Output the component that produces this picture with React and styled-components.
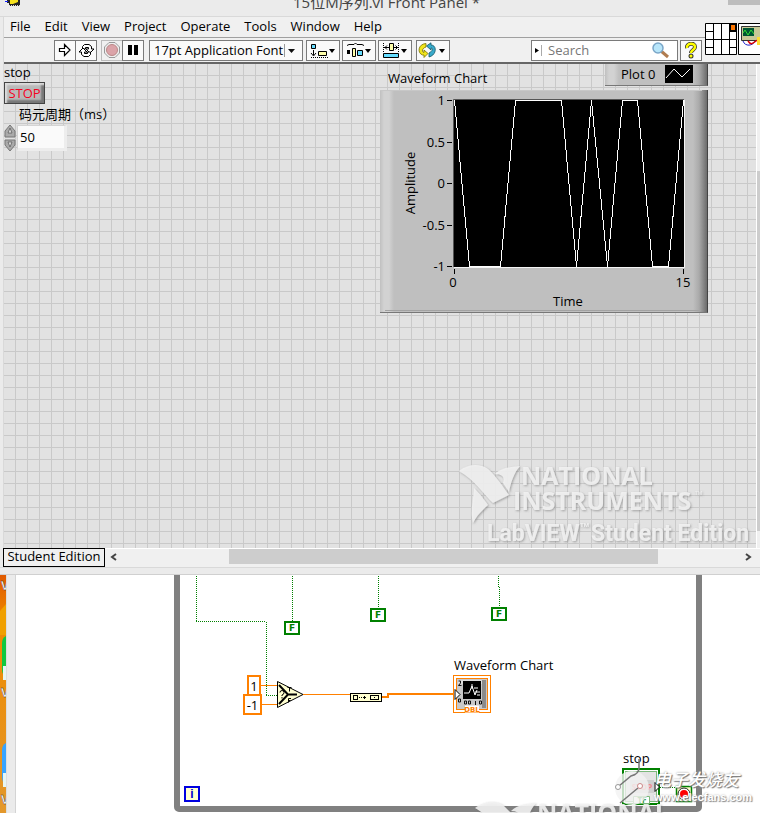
import React from "react";
import styled, { createGlobalStyle, css } from "styled-components";

const Global = createGlobalStyle`
  * { box-sizing: border-box; }
  body { margin: 0; background: #ebebeb; overflow: hidden; }
  button, input, select { font: inherit; color: inherit; margin: 0; }
`;

const Page = styled.div`
  height: 100vh;
  display: flex;
  flex-direction: column;
  overflow: hidden;
  font-family: "Open Sans", "Noto Sans CJK SC", sans-serif;
  font-size: 13px;
  line-height: 18px;
  color: #000;
`;

/* ---------- Front panel window ---------- */
const Window = styled.section`
  flex: none;
  background: #ebebeb;
  border-bottom: 1px solid #d0d0d0;
`;
const TitleBar = styled.header`
  height: 17px;
  display: flex;
  justify-content: space-between;
  align-items: flex-end;
  border-bottom: 1px solid #d9d9d9;
  overflow: hidden;
`;
const TitleIcon = styled.svg`
  width: 20px;
  height: 7px;
  margin: 0 0 0 5px;
  align-self: flex-start;
`;
const Title = styled.h1`
  margin: 0 0 2px 20px;
  font-size: 15px;
  line-height: 24px;
  font-weight: 400;
  color: #444;
  white-space: nowrap;
`;
const CloseStub = styled.span`
  width: 32px;
  height: 5px;
  background: #bdbdbd;
  align-self: flex-start;
`;
const Frame = styled.div`
  margin-left: 3px;
  border-left: 1px solid #d9d9d9;
`;
const Head = styled.div`
  display: flex;
  background: #f0f0f0;
  border-bottom: 2px solid #666;
`;
const HeadBars = styled.div`
  flex: 1;
  min-width: 0;
`;
const MenuBar = styled.nav`
  height: 21px;
  display: flex;
  align-items: center;
  gap: 14px;
  padding: 0 0 3px 6px;
  border-bottom: 1px solid #a0a0a0;
`;
const MenuItem = styled.button`
  padding: 0;
  border: 0;
  background: none;
`;
const Toolbar = styled.div`
  height: 24px;
  display: flex;
  align-items: center;
  padding: 0 3px 0 50px;
`;
const ToolButton = styled.button`
  width: ${(p) => p.$w || 22}px;
  height: 21px;
  padding: 0;
  display: flex;
  align-items: center;
  justify-content: center;
  border: 1px solid ${(p) => (p.$dim ? "#bbb" : "#7a7a7a")};
  background: ${(p) => (p.$dim ? "#f0f0f0" : "#fafafa")};
  margin-left: ${(p) => p.$gap || 0}px;
  flex: none;
  svg { display: block; }
`;
const FontPicker = styled.label`
  position: relative;
  display: flex;
  align-items: center;
  width: 154px;
  height: 21px;
  margin-left: 5px;
  border: 1px solid #7a7a7a;
  background: #fafafa;
  svg { position: absolute; right: 0; pointer-events: none; }
`;
const FontSelect = styled.select`
  appearance: none;
  width: 100%;
  height: 19px;
  padding: 0 0 0 4px;
  border: 0;
  background: none;
`;
const SearchBox = styled.label`
  display: flex;
  align-items: center;
  width: 147px;
  height: 21px;
  margin-left: auto;
  border: 1px solid #7a7a7a;
  background: #fff;
`;
const SearchInput = styled.input`
  flex: 1;
  min-width: 0;
  height: 19px;
  padding: 0 3px;
  border: 0;
  outline: 0;
  background: none;
  &::placeholder { color: #777; opacity: 1; }
`;
const PaneIcons = styled.div`
  display: flex;
  gap: 1px;
  align-items: flex-end;
  width: 55px;
  overflow: hidden;
  svg { flex: none; }
`;
const PanelRow = styled.div`
  display: flex;
`;
const Panel = styled.main`
  position: relative;
  flex: 1;
  height: 484px;
  overflow: hidden;
  background-color: #e2e2e2;
  background-image:
    linear-gradient(#c9c9c9 1px, transparent 1px),
    linear-gradient(90deg, #c9c9c9 1px, transparent 1px);
  background-size: 12px 12px;
  background-position: 0 11px, 11px 0;
`;
const VScroll = styled.div`
  width: 4px;
  border-left: 1px solid #fff;
  background: linear-gradient(#f0f0f0 107px, #cdcdcd 107px 467px, #f0f0f0 467px);
`;
const Placed = styled.div`
  position: absolute;
  left: ${(p) => p.$x}px;
  top: ${(p) => p.$y}px;
  white-space: nowrap;
`;
const StopButton = styled.button`
  display: block;
  width: 41px;
  height: 22px;
  margin-top: 1px;
  padding: 0;
  border: 1px solid #444;
  background: #b9b9b9;
  color: #f5001d;
  box-shadow: inset 2px 2px 2px #ddd, inset -3px -3px 2px #777;
`;
const NumericField = styled.div`
  display: flex;
  align-items: center;
  gap: 1px;
  input {
    width: 50px;
    height: 26px;
    padding: 0 0 0 2px;
    border: 1px solid #d4d4d4;
    border-right: 3px solid #ededed;
    border-bottom: 3px solid #ededed;
    outline: 0;
    background: #fafafa;
  }
`;
const Bevel = css`
  background: linear-gradient(90deg, #c0c0c0, #d2d2d2 4px 9px, #bfbfbf 14px calc(100% - 14px), #aaa calc(100% - 8px), #6c6c6c);
  border-bottom: 1px solid #777;
  border-right: 1px solid #444;
`;
const Legend = styled.div`
  ${Bevel}
  display: flex;
  align-items: center;
  justify-content: space-between;
  width: 103px;
  height: 22px;
  padding: 0 14px 2px 16px;
`;
const Chart = styled.div`
  ${Bevel}
  width: 328px;
  height: 223px;
`;
const Brand = styled.div`
  position: absolute;
  right: ${(p) => p.$right}px;
  top: ${(p) => p.$top}px;
  width: 294px;
  height: 86px;
`;

/* ---------- Status row ---------- */
const StatusRow = styled.div`
  display: flex;
  align-items: stretch;
  height: 19px;
  margin-left: -1px;
  border-top: 1px solid #fff;
`;
const Edition = styled.span`
  width: 102px;
  margin-top: -1px;
  border: 1px solid #000;
  background: #f0f0f0;
  text-align: center;
  line-height: 15px;
`;
const ScrollButton = styled.button`
  width: ${(p) => p.$w}px;
  padding: 0 0 2px;
  border: 0;
  background: #f0f0f0;
  display: flex;
  align-items: center;
  justify-content: center;
`;
const ScrollTrack = styled.div`
  flex: 1;
  background: #f0f0f0;
  padding: 0 78px 3px 107px;
`;
const ScrollThumb = styled.div`
  height: 15px;
  background: #cdcdcd;
`;
const FrameFoot = styled.div`
  height: 7px;
  border-top: 1px solid #d9d9d9;
`;

/* ---------- Block diagram window ---------- */
const Lower = styled.section`
  flex: 1;
  display: flex;
  min-height: 238px;
`;
const Desktop = styled.svg`
  width: 6px;
  height: 238px;
  flex: none;
`;
const Edge = styled.div`
  width: 10px;
  flex: none;
  background: #ebebeb;
  border-right: 1px solid #d4d4d4;
  border-left: 1px solid #ddd;
`;
const Diagram = styled.div`
  position: relative;
  flex: 1;
  background: #fff;
  overflow: hidden;
`;
const Loop = styled.div`
  position: absolute;
  left: 158px;
  top: -10px;
  width: 528px;
  height: 247px;
  border: 6px solid #808080;
  border-radius: 0 0 5px 5px;
`;
const Layer = styled.svg`
  position: absolute;
  left: 0;
  top: 0;
`;
const Const = styled.div`
  display: flex;
  align-items: center;
  justify-content: center;
  width: ${(p) => p.$w}px;
  height: ${(p) => p.$h}px;
  border: 2px solid ${(p) => p.$c};
  background: #fff;
`;
const LogicConst = styled(Const)`
  color: #008000;
  font: 700 9px "DejaVu Sans", sans-serif;
`;
const IndexTerminal = styled(Const)`
  background: #ffffd0;
  color: #00c;
  font: 700 12px "Liberation Sans", sans-serif;
`;
const SiteName = styled.div`
  color: #fff;
  font: italic 500 17px/20px "Noto Sans CJK SC", sans-serif;
  text-shadow: 1px 1px 1px #777, 0 0 2px #999;
`;
const SiteUrl = styled.div`
  color: #fff;
  font: 700 11px/16px "Liberation Sans", sans-serif;
  text-shadow: 1px 1px 1px #888, 0 0 2px #aaa;
`;

const Caret = () => (
  <svg width="19" height="19" viewBox="0 0 19 19">
    <path d="M1.500 3v13" stroke="#999" />
    <path d="M5 8h7l-3.500 4z" fill="#111" />
  </svg>
);

const STEPS = [1, -1, -1, -1, 1, 1, 1, 1, -1, 1, -1, 1, 1, -1, -1, 1];

function WaveChart() {
  const pts = STEPS.map((v, i) => `${Math.round(74 + (i * 229) / 15) + 0.5},${v > 0 ? 10.5 : 176.5}`).join(" ");
  return (
    <Chart>
      <svg width="327" height="222" viewBox="0 0 327 222" fontSize="13" role="img" aria-label="Waveform Chart">
        <path d="M0 .5h322" stroke="#c7c7c7" />
        <path d="M5 220.500h316" stroke="#a2a2a2" />
        <rect x="74" y="10" width="230" height="167" fill="#000" />
        <path d="M73.500 177V9.500H304" stroke="#555" fill="none" />
        <path d="M304.500 10V177.500H74" stroke="#f4f4f4" fill="none" />
        <polyline points={pts} fill="none" stroke="#fff" strokeWidth="1" shapeRendering="crispEdges" />
        {["1", "0.5", "0", "-0.5", "-1"].map((t, i) => (
          <g key={t}>
            <text x="65" y={15 + Math.round(i * 41.5)} textAnchor="end">{t}</text>
            <path d={`M67 ${10.5 + Math.round(i * 41.5)}h5`} stroke="#000" />
          </g>
        ))}
        <path d="M74.500 179v5M303.500 179v5" stroke="#000" />
        <text x="73" y="197" textAnchor="middle">0</text>
        <text x="303" y="197" textAnchor="middle">15</text>
        <text x="188" y="216" textAnchor="middle">Time</text>
        <text transform="translate(35 93) rotate(-90)" textAnchor="middle">Amplitude</text>
      </svg>
    </Chart>
  );
}

function NiBrand({ right, top, id }) {
  return (
    <Brand $right={right} $top={top}>
      <svg width="294" height="86" viewBox="0 0 294 86" fontFamily='"Open Sans", sans-serif' fontWeight="700" fill="#f2f2f2" fillOpacity=".88" filter={`url(#${id})`}>
        <defs>
          <filter id={id} x="-5%" y="-5%" width="110%" height="115%">
            <feDropShadow dx="1" dy="1" stdDeviation=".8" floodColor="#666" floodOpacity=".6" />
          </filter>
        </defs>
        <path d="M0 6C10 -2 22 -1 29 4C38 12 44 22 50 30L34 38C26 31 16 15 0 6Z" />
        <path d="M36 9C43 2 52 2 61 1C55 8 52 17 50 27L44 18Q47 9 36 9Z" />
        <path d="M15 23C22 30 24 33 29 40C23 46 18 50 14 58C11 47 14 38 15 23Z" />
        <text x="62" y="20" fontSize="25">NATIONAL</text>
        <text x="54" y="45" fontSize="25">INSTRUMENTS</text>
        <text x="236" y="30" fontSize="5" fontWeight="400">TM</text>
        <g fontFamily="Roboto, sans-serif">
          <text x="28" y="76" fontSize="23">LabVIEW</text>
          <text x="121" y="62" fontSize="6">TM</text>
          <text x="132" y="76" fontSize="23">Student Edition</text>
        </g>
      </svg>
    </Brand>
  );
}

function DesktopStrip() {
  return (
    <Desktop viewBox="0 0 6 238" aria-label="Desktop">
      <defs>
        <linearGradient id="desk" x1="0" y1="0" x2="0" y2="1">
          <stop offset="0" stopColor="#e05a00" />
          <stop offset=".2" stopColor="#ef8a00" />
          <stop offset="1" stopColor="#e3982c" />
        </linearGradient>
      </defs>
      <path d="M0 0h6v238H0z" fill="url(#desk)" />
      <path d="M0 36L6 29V60H0z" fill="#f0a000" />
      <path d="M6 61Q2 63 2 68V94Q2 100 6 102z" fill="#10c840" />
      <path d="M6 168Q2 170 2 175V201Q2 208 6 210z" fill="#38a4ff" />
      <path d="M3 91h3v14H3zM3 198h3v14H3z" fill="#e6f6f4" />
      <g fill="#fff" stroke="#333" strokeWidth=".4" fontSize="12" fontWeight="700">
        <text x="1" y="15">V</text>
        <text x="1" y="122">V</text>
        <text x="1" y="229">V</text>
      </g>
    </Desktop>
  );
}

function Wiring() {
  return (
    <Layer width="744" height="238" viewBox="0 0 744 238" fill="none">
      <g stroke="#008000" strokeDasharray="1 1" shapeRendering="crispEdges">
        <path d="M180.500 1V46.500M180 46.500H250M250.500 47V120.500M250 120.500H261" />
        <path d="M276.500 1V46M362.500 1V33M482.500 1V12M483.500 12V32" />
        <path d="M644 212.500H660" />
      </g>
      <g stroke="#ff8000" shapeRendering="crispEdges">
        <path d="M245 110.500H261M246 129.500H261M287 119.500H334" />
        <path d="M366 122H372V119H437" strokeWidth="2" />
      </g>
      {/* select */}
      <path d="M261.500 106.500L287 119.500L261.500 132.500Z" fill="#ffffd0" stroke="#000" />
      <path d="M263 110L272 119.500L263 129M272 119.500H281" stroke="#000" strokeWidth="2" />
      <path d="M264 117.500q0-2 2-2t2 2-2 2.500v1M266 122v1.500M271.500 112.500h4M273.500 112.500v4M275 123.500h-2.500v4M272.500 125.500h2" stroke="#000" />
      {/* array node */}
      <g shapeRendering="crispEdges">
        <path d="M334.500 118.500h31v8h-31z" fill="#ffffd0" stroke="#000" />
        <path d="M337.500 120.500h4v4h-4zM354.500 120.500h8v4h-8z" stroke="#000" />
        <path d="M343 122.500h5" stroke="#000" strokeDasharray="1 1" />
        <path d="M347 122.500h3M348.500 121v3M358 122.500h1" stroke="#000" />
      </g>
      {/* chart terminal */}
      <g shapeRendering="crispEdges">
        <path d="M437.500 100.500h37v37h-37z" fill="#fff" stroke="#ff8000" />
        <path d="M440.500 103.500h31v31h-31z" fill="#c8c8c8" stroke="#ff8000" />
        <path d="M442 105h28v4h-28z" fill="#ddd" />
        <path d="M466 105h4v28h-4z" fill="#8a8a8a" />
        <path d="M447 106h18v18h-18z" fill="#000" />
      </g>
      <path d="M448 118h5l3-7 3 9 2-5M456 109v5M458 113h4M459 117h5M461 120h3" stroke="#fff" />
      <path d="M442.500 106h2v2l-2 2.500h3M442.500 124h2v3h-2zM448.500 126h2v3h-2zM452.500 126h2v3h-2zM459.500 126v4M463.500 126h2v3h-2z" stroke="#111" />
      <path d="M439 114.500v10l5-5z" fill="#fff" stroke="#000" />
      <path d="M449 130.500h14v7h-14z" fill="#fff" />
      <text x="456" y="137" textAnchor="middle" fill="#ff8000" fontSize="7" fontWeight="700" fontFamily='"DejaVu Sans", sans-serif'>DBL</text>
      {/* stop terminal */}
      <g shapeRendering="crispEdges">
        <path d="M607 194h36v35h-36z" fill="#fff" stroke="#008000" strokeWidth="2" />
        <path d="M609.500 196.500h31v30h-31z" fill="#e4e4e4" stroke="#7bb87b" />
        <path d="M614 205h24v13h-24z" fill="#cfcfcf" />
      </g>
      <text x="626" y="215" textAnchor="middle" fill="#e88" fontSize="8" fontWeight="700">STOP</text>
      <path d="M617.500 221.500h16v7h-16z" fill="#fff" stroke="#7bb87b" />
      <text x="626" y="228" textAnchor="middle" fill="#3a9a3a" fontSize="8" fontWeight="700">TF</text>
      <path d="M639 207.500v9l4.500-4.500z" fill="#fff" stroke="#000" />
      {/* loop condition */}
      <path d="M660.500 211.500h15v15h-15z" fill="#ffffc8" stroke="#008000" strokeWidth="1.500" />
      <circle cx="668" cy="219" r="6" fill="#fff" stroke="#222" />
      <circle cx="668" cy="219" r="4" fill="#f00" />
    </Layer>
  );
}

function SiteMark() {
  return (
    <>
      <Placed $x={595} $y={184}>
        <svg width="48" height="54" viewBox="0 0 48 54" fill="none">
          <circle cx="21" cy="29" r="17" fill="#f3f3f3" fillOpacity=".8" />
          <path d="M8 27L20 17Q28 15 28 9V0M9 44L27 29" stroke="#777" strokeWidth="1.500" />
          <circle cx="7" cy="28" r="2.500" fill="#fff" stroke="#999" />
          <circle cx="29" cy="27" r="2.500" fill="#fff" stroke="#c88" />
        </svg>
      </Placed>
      <Placed $x={638} $y={194}>
        <SiteName>电子发烧友</SiteName>
        <SiteUrl>www.elecfans.com</SiteUrl>
      </Placed>
    </>
  );
}

const MENUS = ["File", "Edit", "View", "Project", "Operate", "Tools", "Window", "Help"];

export default function App() {
  return (
    <Page>
      <Global />
      <Window>
        <TitleBar>
          <TitleIcon viewBox="0 0 20 7">
            <path d="M2 0h13v6H4V3H2z" fill="#222" />
            <path d="M5 0h8v2l-5 2H5z" fill="#f5e11d" />
            <path d="M0 1.500h3" stroke="#12f" />
            <path d="M4 5.500h11" stroke="#ddd" strokeDasharray="1 1" />
          </TitleIcon>
          <Title>15位M序列.vi Front Panel *</Title>
          <CloseStub />
        </TitleBar>
        <Frame>
          <Head>
            <HeadBars>
              <MenuBar>{MENUS.map((m) => <MenuItem key={m}>{m}</MenuItem>)}</MenuBar>
              <Toolbar>
                <ToolButton aria-label="Run">
                  <svg width="14" height="14" viewBox="0 0 14 14"><path d="M1.500 5.500h5v-4l5.500 5.500-5.500 5.500v-4h-5z" fill="#fff" stroke="#000" strokeWidth="1.200" /></svg>
                </ToolButton>
                <ToolButton aria-label="Run continuously" $gap={-1}>
                  <svg width="17" height="15" viewBox="0 0 17 15" fill="#fff" stroke="#000">
                    <path d="M4.500 6V3.500L6.500 1.500H11l2.500 2V6h2.500L12 10 8 6h2.500V4.500H7.500V6z" />
                    <path d="M12.500 9v2.500l-2 2H6l-2.500-2V9H1L5 5l4 4H6.500v1.500h3V9z" />
                  </svg>
                </ToolButton>
                <ToolButton aria-label="Abort" $gap={4} $dim>
                  <svg width="16" height="16" viewBox="0 0 16 16"><path d="M5 .5h6L15.500 5v6L11 15.500H5L.5 11V5z" fill="#eee" stroke="#999" /><circle cx="8" cy="8" r="5.500" fill="#dba3a8" stroke="#b88" /></svg>
                </ToolButton>
                <ToolButton aria-label="Pause" $gap={-1}>
                  <svg width="10" height="10" viewBox="0 0 10 10"><path d="M0 0h4v10H0zM6 0h4v10H6z" /></svg>
                </ToolButton>
                <FontPicker>
                  <FontSelect aria-label="Font"><option>17pt Application Font</option></FontSelect>
                  <Caret />
                </FontPicker>
                <ToolButton aria-label="Align" $w={34} $gap={3}>
                  <svg width="30" height="17" viewBox="0 0 30 17"><path d="M3.500 2.500h4v4h-4z" fill="#6df" stroke="#000" /><path d="M10.500 9.500h8v4h-8z" fill="#ffa" stroke="#000" /><path d="M5.500 8v5M3 11l2.500 3L8 11" stroke="#000" fill="none" /><path d="M3 15.500h17" stroke="#000" strokeDasharray="1 1" /><path d="M21 7h6l-3 4z" /></svg>
                </ToolButton>
                <ToolButton aria-label="Distribute" $w={34} $gap={2}>
                  <svg width="30" height="17" viewBox="0 0 30 17"><path d="M3 3.500L5 2.500h5l1.500-1.500L13 2.500h5l2 1" stroke="#000" fill="none" /><path d="M3 8h3v4H3z" /><path d="M8.500 6.500h3v8h-3z" fill="#ffa" stroke="#000" /><path d="M13.500 8.500h5v5h-5z" fill="#6df" stroke="#000" /><path d="M21 7h6l-3 4z" /></svg>
                </ToolButton>
                <ToolButton aria-label="Resize" $w={34} $gap={2}>
                  <svg width="30" height="17" viewBox="0 0 30 17"><path d="M3.500 1v10M18.500 1v10" stroke="#000" strokeDasharray="1 1" /><path d="M9.500 1.500h4v7h-4z" fill="#ffa" stroke="#000" /><path d="M3.500 11.500h15v4h-15z" fill="#6df" stroke="#000" /><path d="M4 5.500h5M14 5.500h4M7 3.500L5 5.500l2 2M15.500 3.500l2 2-2 2" stroke="#000" fill="none" /><path d="M21 7h6l-3 4z" /></svg>
                </ToolButton>
                <ToolButton aria-label="Reorder" $w={34} $gap={4}>
                  <svg width="30" height="17" viewBox="0 0 30 17"><path d="M8 1.500C0 2 -1 11 4.500 13H6v2.500l4-4-4-3.500v2.500C3 9.500 4.500 6 8 5z" fill="#f1e51b" stroke="#776f00" strokeWidth=".8" /><path d="M8.500 4L13 .8V3c6 0 6 10-2 12v-4c4-2 4-5 2-5v2z" fill="#38aacb" stroke="#156" strokeWidth=".8" /><path d="M21 7h6l-3 4z" /></svg>
                </ToolButton>
                <SearchBox>
                  <svg width="13" height="17" viewBox="0 0 13 17"><path d="M3 6l4 2.500L3 11z" /><path d="M9.500 3v11" stroke="#aaa" /></svg>
                  <SearchInput placeholder="Search" aria-label="Search" />
                  <svg width="26" height="19" viewBox="0 0 26 19"><path d="M10 10l7 6" stroke="#b07c50" strokeWidth="3" /><circle cx="7" cy="7" r="5" fill="#b8e6fa" stroke="#7aa6c8" strokeWidth="1.500" /></svg>
                </SearchBox>
                <ToolButton aria-label="Help" $gap={2}>
                  <svg width="12" height="17" viewBox="0 0 12 17"><path d="M2 6C1 1 10 0 10 5c0 3-4 3-4 6" fill="none" stroke="#333" strokeWidth="4" /><circle cx="6" cy="14" r="2.500" fill="#333" /><path d="M2 6C1 1 10 0 10 5c0 3-4 3-4 6" fill="none" stroke="#ff0" strokeWidth="2.500" /><circle cx="6" cy="14" r="1.500" fill="#ff0" /></svg>
                </ToolButton>
              </Toolbar>
            </HeadBars>
            <PaneIcons>
              <svg width="32" height="39" viewBox="0 0 32 39"><path d="M.5 .5h31v31H.5zM8.500 .5v31M16.500 .5v31M24.500 .5v31M.5 8.500h8M.5 16.500h31M.5 24.500h8M24.500 8.500h7M24.500 24.500h7" fill="#fff" stroke="#000" /><path d="M24 0h8v9h-8z" /><path d="M26 2h4v5h-4z" fill="#f70" /></svg>
              <svg width="32" height="39" viewBox="0 0 32 39"><path d="M.5 .5h31v31H.5z" fill="#fff" stroke="#000" /><path d="M3.500 3.500h20v14h-20z" fill="#c8c896" stroke="#333" /><path d="M5 5h11v8H5z" fill="#053" /><path d="M5 10l2-3 3 5 3-5 3 4" fill="none" stroke="#3d3" /><path d="M5 18c2 6 10 5 12 0" fill="none" stroke="#22c" /><path d="M10 18c4 6 6 0 10-1" fill="none" stroke="#d00" strokeWidth="1.500" /><path d="M19 14h12v8H19z" fill="#fd3" /></svg>
            </PaneIcons>
          </Head>
          <PanelRow>
            <Panel>
              <Placed $x={0} $y={-1}>stop<StopButton>STOP</StopButton></Placed>
              <Placed $x={15} $y={41}><label htmlFor="period">码元周期（ms）</label></Placed>
              <Placed $x={0} $y={60}>
                <NumericField>
                  <svg width="12" height="28" viewBox="0 0 12 28"><path d="M6 1l5 6v6H1V7zM1 16h10v5l-5 6-5-6z" fill="#aaa" stroke="#777" /><path d="M6 4l2 5H4zM4 18h4l-2 5z" fill="#ddd" stroke="#555" strokeWidth=".7" /></svg>
                  <input id="period" defaultValue="50" />
                </NumericField>
              </Placed>
              <Placed $x={384} $y={5}>Waveform Chart</Placed>
              <Placed $x={601} $y={0}>
                <Legend>Plot 0
                  <svg width="28" height="18" viewBox="0 0 28 18"><path d="M0 0h28v18H0z" fill="#000" /><path d="M1 13l8-9 8 8 8-8" stroke="#fff" fill="none" /></svg>
                </Legend>
              </Placed>
              <Placed $x={376} $y={26}><WaveChart /></Placed>
              <NiBrand right={3} top={401} id="panelMark" />
            </Panel>
            <VScroll />
          </PanelRow>
          <StatusRow>
            <Edition>Student Edition</Edition>
            <ScrollButton $w={17} aria-label="Scroll left"><svg width="7" height="8" viewBox="0 0 7 8"><path d="M6 1L2 4l4 3" fill="none" stroke="#444" strokeWidth="2" /></svg></ScrollButton>
            <ScrollTrack><ScrollThumb /></ScrollTrack>
            <ScrollButton $w={24} aria-label="Scroll right"><svg width="7" height="8" viewBox="0 0 7 8"><path d="M1 1l4 3-4 3" fill="none" stroke="#444" strokeWidth="2" /></svg></ScrollButton>
          </StatusRow>
        </Frame>
        <FrameFoot />
      </Window>
      <Lower>
        <DesktopStrip />
        <Edge />
        <Diagram>
          <Loop />
          <Wiring />
          <Placed $x={268} $y={46}><LogicConst $w={16} $h={14} $c="#008000">F</LogicConst></Placed>
          <Placed $x={354} $y={33}><LogicConst $w={16} $h={14} $c="#008000">F</LogicConst></Placed>
          <Placed $x={475} $y={32}><LogicConst $w={16} $h={14} $c="#008000">F</LogicConst></Placed>
          <Placed $x={231} $y={100}><Const $w={14} $h={21} $c="#ff8000">1</Const></Placed>
          <Placed $x={227} $y={119}><Const $w={19} $h={21} $c="#ff8000">-1</Const></Placed>
          <Placed $x={438} $y={81}>Waveform Chart</Placed>
          <Placed $x={607} $y={174}>stop</Placed>
          <Placed $x={168} $y={211}><IndexTerminal $w={16} $h={16} $c="#0000e0">i</IndexTerminal></Placed>
          <NiBrand right={-9} top={227} id="diagramMark" />
          <SiteMark />
        </Diagram>
      </Lower>
    </Page>
  );
}
